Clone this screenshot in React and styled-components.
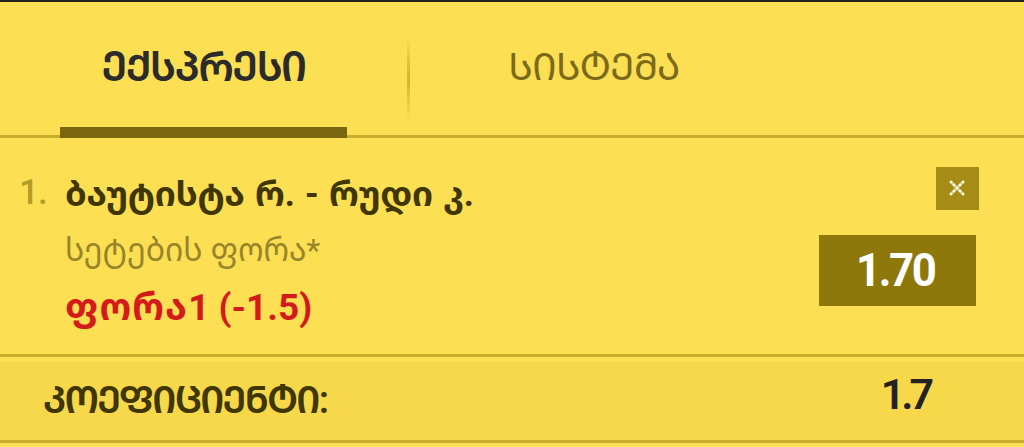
import React from "react";
import styled, { createGlobalStyle } from "styled-components";

const App = () => {
  return (
    <>
      <GlobalStyle />
      <Coupon>
        <Tabs>
          <Tab active>
            <TabText size="41px" weight="600" spacing="-1.7px" color="#2b2b2b">ექსპრესი</TabText>
          </Tab>
          <Divider />
          <Tab>
            <TabText size="39px" weight="400" spacing="-0.8px" color="#7c6a1b">სისტემა</TabText>
          </Tab>
        </Tabs>
        <Bet>
          <Num>1.</Num>
          <BetInfo>
            <Teams>ბაუტისტა რ. - რუდი კ.</Teams>
            <Market>სეტების ფორა*</Market>
            <Pick><PickName>ფორა</PickName>1 (-1.5)</Pick>
          </BetInfo>
          <BetSide>
            <RemoveBtn aria-label="remove">
              <svg width="16" height="16" viewBox="0 0 16 16">
                <path d="M2 2L14 14M14 2L2 14" stroke="#d8cc8c" strokeWidth="2.8" strokeLinecap="round" />
                <path d="M2 2L14 14M14 2L2 14" stroke="#fffbe6" strokeWidth="2.8" strokeLinecap="round" strokeDasharray="0.1 4.14" />
              </svg>
            </RemoveBtn>
            <Odd><OddText>1.70</OddText></Odd>
          </BetSide>
        </Bet>
        <Total>
          <TotalLabel>კოეფიციენტი:</TotalLabel>
          <TotalValue>1.7</TotalValue>
        </Total>
      </Coupon>
    </>
  );
};

const GlobalStyle = createGlobalStyle`
  * {
    box-sizing: border-box;
  }
  body {
    margin: 0;
    overflow: hidden;
    background: #fddf54;
    font-family: Roboto, "Noto Sans Georgian", "DejaVu Sans", sans-serif;
  }
`;

const Coupon = styled.div`
  width: 1024px;
  height: 447px;
  border-top: 2px solid #22201c;
  background: #fddf54;
  white-space: nowrap;
`;

const Tabs = styled.div`
  display: flex;
  height: 136px;
  padding-left: 60px;
  border-bottom: 3px solid #c8ad2f;
`;
const Tab = styled.div`
  width: ${(props) => (props.active ? "287px" : "368px")};
  height: 136px;
  padding-top: 42px;
  text-align: center;
  border-bottom: ${(props) => (props.active ? "11px solid #79660f" : "none")};
`;
const TabText = styled.span`
  display: inline-block;
  font-size: ${(props) => props.size};
  font-weight: ${(props) => props.weight};
  letter-spacing: ${(props) => props.spacing};
  color: ${(props) => props.color};
  font-feature-settings: "case";
  line-height: 46px;
`;
const Divider = styled.div`
  width: 3px;
  height: 84px;
  margin: 35px 0 0 60px;
  background: linear-gradient(#fddf54, #d4b420 50%, #fddf54);
`;

const Bet = styled.div`
  display: flex;
  height: 219px;
  padding: 29px 45px 0 19px;
  border-bottom: 3px solid #c8ad2f;
`;
const Num = styled.div`
  width: 46px;
  font-size: 35px;
  font-weight: 500;
  letter-spacing: -1px;
  line-height: 51px;
  color: #b39d27;
`;
const BetInfo = styled.div`
  flex: 1;
`;
const Teams = styled.div`
  font-size: 34.8px;
  font-weight: 700;
  letter-spacing: -0.2px;
  word-spacing: 2px;
  line-height: 54px;
  color: #403600;
`;
const Market = styled.div`
  font-size: 31.9px;
  line-height: 58px;
  color: #988529;
`;
const Pick = styled.div`
  font-size: 37px;
  font-weight: 700;
  line-height: 58px;
  color: #d41b1b;
`;
const PickName = styled.span`
  letter-spacing: 1.2px;
`;
const BetSide = styled.div`
  display: flex;
  flex-direction: column;
  align-items: flex-end;
  gap: 25px;
`;
const RemoveBtn = styled.button`
  display: flex;
  align-items: center;
  justify-content: center;
  width: 43px;
  height: 43px;
  padding: 0 1px 1px 0;
  border: none;
  background: #a58c17;
`;
const Odd = styled.div`
  width: 157px;
  height: 71px;
  margin-right: 3px;
  padding-right: 5px;
  background: #8e780c;
  text-align: center;
`;
const OddText = styled.span`
  display: inline-block;
  font-size: 46px;
  font-weight: 700;
  letter-spacing: -2.5px;
  line-height: 71px;
  color: #ffffff;
  transform: scaleX(0.95);
`;

const Total = styled.div`
  display: flex;
  justify-content: space-between;
  height: 86px;
  padding: 0 94px 0 43px;
  background: linear-gradient(#fddf54 5px, #f7d84b 5px);
  border-bottom: 3px solid #c8ad2f;
`;
const TotalLabel = styled.div`
  font-size: 38px;
  font-weight: 600;
  letter-spacing: -2px;
  font-feature-settings: "case";
  line-height: 87px;
  color: #403600;
`;
const TotalValue = styled.div`
  font-size: 43px;
  font-weight: 600;
  letter-spacing: -4px;
  line-height: 74px;
  color: #222222;
`;

export default App;
